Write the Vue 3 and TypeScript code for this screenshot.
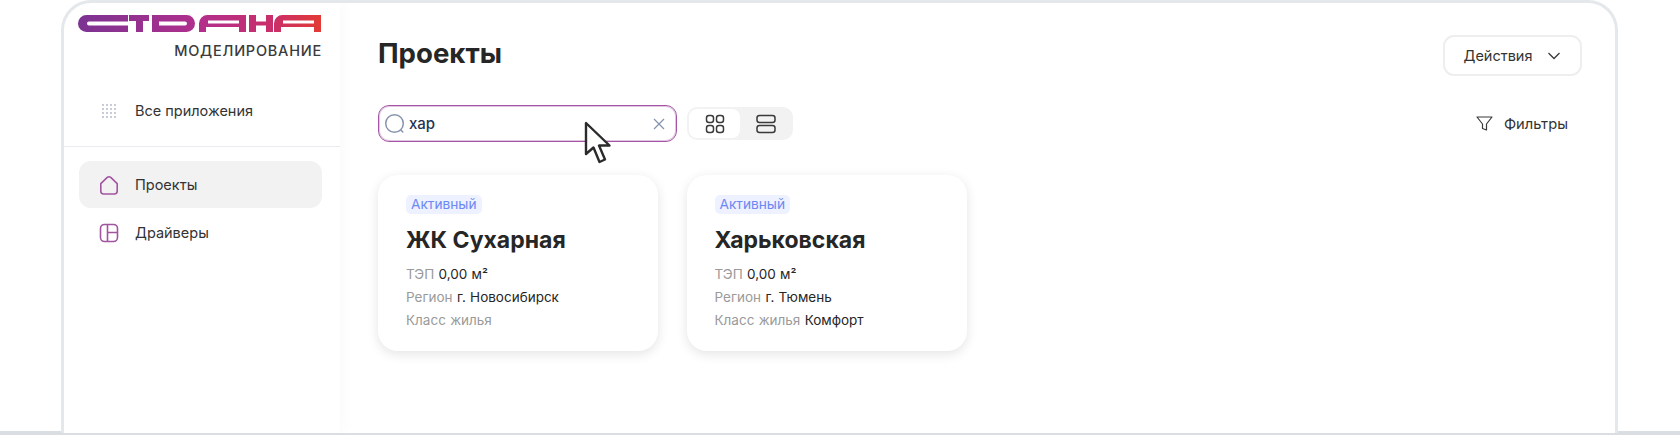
<script setup lang="ts">
const projects = [
  { name: 'ЖК Сухарная', region: 'г. Новосибирск', housing: '' },
  { name: 'Харьковская', region: 'г. Тюмень', housing: 'Комфорт' },
];

const dots = [1.5, 5.5, 9.5, 13.5];
</script>

<template>
  <div class="stage">
    <div class="frame">
      <aside class="sidebar">
        <div class="brand">
          <svg class="logo" width="244" height="17" viewBox="0 0 244 17" aria-label="Страна">
            <defs>
              <linearGradient id="logoGrad" x1="0" y1="0" x2="1" y2="0">
                <stop offset="0" stop-color="#7b3392" />
                <stop offset="0.5" stop-color="#b22f8c" />
                <stop offset="0.8" stop-color="#c92f6a" />
                <stop offset="1" stop-color="#e23a34" />
              </linearGradient>
            </defs>
            <path
              fill="url(#logoGrad)"
              fill-rule="evenodd"
              d="M50 0H8.500a8.500 8.500 0 0 0 0 17H50v-6.500H11a2 2 0 0 1 0-4H50Z
                 M51 0H71V6H65V17H58V6H51Z
                 M74 0H108.500a8.500 8.500 0 0 1 0 17H74Z M81 6.500H107a2 2 0 0 1 0 4H81Z
                 M168 0H129.500A8.500 8.500 0 0 0 121 8.500V17H128V12H161V17H168Z M130 5.500H161V8.500H130Z
                 M171 0H178V6.500H188V0H195V17H188V10.500H178V17H171Z
                 M243 0H204.500A8.500 8.500 0 0 0 196 8.500V17H203V12H236V17H243Z M205 5.500H236V8.500H205Z"
            />
          </svg>
          <div class="brand-sub">МОДЕЛИРОВАНИЕ</div>
        </div>

        <div class="nav-top">
          <a class="nav-item">
            <svg class="nav-icon" width="20" height="20" viewBox="-2.500 -2.500 20 20">
              <template v-for="y in dots" :key="y">
                <circle v-for="x in dots" :key="x" :cx="x" :cy="y" r="0.8" fill="#7f8ca6" />
              </template>
            </svg>
            <span>Все приложения</span>
          </a>
        </div>

        <nav class="nav-main">
          <a class="nav-item nav-item--active">
            <svg class="nav-icon" width="20" height="20" viewBox="0 0 20 20" fill="none" stroke="#a2559f" stroke-width="1.600">
              <path d="M1.800 8.600 8 2.700a2.900 2.900 0 0 1 4 0l6.200 5.900V16a3 3 0 0 1-3 3H4.800a3 3 0 0 1-3-3Z" stroke-linejoin="round" />
            </svg>
            <span>Проекты</span>
          </a>
          <a class="nav-item">
            <svg class="nav-icon" width="20" height="20" viewBox="0 0 20 20" fill="none" stroke="#a2559f" stroke-width="1.600">
              <rect x="1.500" y="1.500" width="17" height="17" rx="4" />
              <path d="M8.500 1.500v17M8.500 9.500H18.500" />
            </svg>
            <span>Драйверы</span>
          </a>
        </nav>
      </aside>

      <main class="content">
        <header class="page-head">
          <h1>Проекты</h1>
          <button class="actions">
            Действия
            <svg width="14" height="8" viewBox="0 0 14 8" fill="none" stroke="#3a3a3a" stroke-width="1.300">
              <path d="M1.500 1 7 6.500 12.500 1" />
            </svg>
          </button>
        </header>

        <div class="toolbar">
          <div class="search">
            <svg width="22" height="22" viewBox="0 0 22 22" fill="none" stroke="#8594ad" stroke-width="1.500">
              <circle cx="10.500" cy="10.500" r="8.800" />
              <path d="m16.800 17 2 2" stroke-linecap="round" />
            </svg>
            <span class="search-value">хар</span>
            <svg class="search-clear" width="12" height="12" viewBox="0 0 12 12" fill="none" stroke="#8594ad" stroke-width="1.200">
              <path d="M1 1l10 10M11 1 1 11" />
            </svg>
          </div>

          <div class="view-toggle">
            <span class="view-btn view-btn--on">
              <svg width="20" height="20" viewBox="0 0 20 20" fill="none" stroke="#3a3a3a" stroke-width="1.500">
                <rect x="1.500" y="1.500" width="7" height="7" rx="2.500" />
                <rect x="11.500" y="1.500" width="7" height="7" rx="2.500" />
                <rect x="1.500" y="11.500" width="7" height="7" rx="2.500" />
                <rect x="11.500" y="11.500" width="7" height="7" rx="2.500" />
              </svg>
            </span>
            <span class="view-btn">
              <svg width="20" height="20" viewBox="0 0 20 20" fill="none" stroke="#3a3a3a" stroke-width="1.500">
                <rect x="1" y="1.500" width="18" height="7" rx="2.500" />
                <rect x="1" y="11.500" width="18" height="7" rx="2.500" />
              </svg>
            </span>
          </div>

          <div class="filters">
            <svg width="17" height="16" viewBox="0 0 17 16" fill="none" stroke="#3a3a3a" stroke-width="1.200" stroke-linejoin="round">
              <path d="M1 1h15l-5.500 7v6l-4-1.500V8Z" />
            </svg>
            <span>Фильтры</span>
          </div>
        </div>

        <div class="cards">
          <article v-for="p in projects" :key="p.name" class="card">
            <span class="badge">Активный</span>
            <h2>{{ p.name }}</h2>
            <p><span class="label">ТЭП</span> 0,00 м²</p>
            <p><span class="label">Регион</span> {{ p.region }}</p>
            <p><span class="label">Класс жилья</span> {{ p.housing }}</p>
          </article>
        </div>
      </main>

      <svg class="cursor" width="28" height="44" viewBox="0 0 28 44">
        <path d="M2 2V33L9.500 26.500 15.500 41 21 38.500 15 24.500H25.500Z" fill="#fff" stroke="#2b2b2b" stroke-width="2.400" stroke-linejoin="round" />
      </svg>
    </div>
    <div class="strip"></div>
  </div>
</template>

<style scoped>
.stage {
  width: 1680px;
  height: 435px;
  background: #fff;
  overflow: hidden;
  font-family: Inter, "Noto Sans", sans-serif;
  color: #2b2b2b;
}

.frame {
  position: relative;
  z-index: 1;
  box-sizing: border-box;
  width: 1557px;
  height: 433px;
  margin-left: 61px;
  margin-bottom: -2px;
  display: flex;
  background: #fff;
  border: 3px solid #e5e8eb;
  border-bottom: none;
  border-radius: 30px 30px 0 0;
  overflow: hidden;
}

.strip {
  height: 4px;
  background: #dadde1;
}

.sidebar {
  box-sizing: border-box;
  width: 276px;
  flex-shrink: 0;
  box-shadow: 4px 0 14px rgba(0, 0, 0, 0.025);
}

.brand {
  padding: 12px 18px 0 15px;
  display: flex;
  flex-direction: column;
  align-items: flex-end;
}

.logo {
  display: block;
}

.brand-sub {
  margin-top: 10px;
  font-size: 14.500px;
  line-height: 18px;
  font-weight: 500;
  letter-spacing: 0.77px;
  color: #3b3b3b;
}

.nav-top {
  margin-top: 27px;
  padding: 0 15px 12px;
  border-bottom: 1px solid #e9ecef;
}

.nav-main {
  padding: 14px 18px 0 15px;
  display: flex;
  flex-direction: column;
  gap: 1px;
}

.nav-item {
  height: 47px;
  padding-left: 20px;
  display: flex;
  align-items: center;
  gap: 16px;
  border-radius: 12px;
  font-size: 14.500px;
  color: #333;
}

.nav-item--active {
  background: #f2f2f2;
}

.nav-icon {
  flex-shrink: 0;
}

.content {
  flex: 1;
  min-width: 0;
  padding: 32px 33px 0 38px;
}

.page-head {
  display: flex;
  align-items: flex-start;
  justify-content: space-between;
  height: 41px;
}

.page-head h1 {
  margin: 0;
  font-size: 27.600px;
  font-weight: 700;
  line-height: 36px;
  color: #262626;
}

.actions {
  box-sizing: border-box;
  width: 139px;
  height: 41px;
  display: flex;
  align-items: center;
  justify-content: center;
  gap: 15px;
  background: #fff;
  border: 2px solid #eeeeee;
  border-radius: 11px;
  font-family: inherit;
  font-size: 14.500px;
  color: #333;
}

.toolbar {
  margin-top: 29px;
  display: flex;
  align-items: center;
  gap: 10px;
}

.search {
  box-sizing: border-box;
  width: 299px;
  height: 37px;
  padding: 0 11px 0 5px;
  display: flex;
  align-items: center;
  gap: 3px;
  border: 1px solid #a555a5;
  box-shadow: inset 0 0 0 1px rgba(168, 91, 168, 0.35);
  border-radius: 11px;
}

.search-value {
  flex: 1;
  font-size: 15px;
  font-weight: 500;
  color: #1f3554;
}

.view-toggle {
  box-sizing: border-box;
  width: 106px;
  height: 33px;
  padding: 2px;
  display: flex;
  background: #f2f2f2;
  border-radius: 10px;
}

.view-btn {
  flex: 1;
  display: flex;
  align-items: center;
  justify-content: center;
  border-radius: 8px;
}

.view-btn--on {
  background: #fff;
}

.filters {
  margin-left: auto;
  margin-right: 14px;
  display: flex;
  align-items: center;
  gap: 11px;
  font-size: 14.700px;
  color: #333;
}

.cards {
  margin-top: 33px;
  display: flex;
  gap: 28.500px;
}

.card {
  box-sizing: border-box;
  width: 280px;
  height: 176px;
  padding: 20px 28px 0;
  background: #fff;
  border-radius: 20px;
  box-shadow: 0 3px 12px rgba(0, 0, 0, 0.11);
}

.badge {
  display: inline-block;
  padding: 0 5px;
  height: 19px;
  line-height: 19px;
  background: #eef1ff;
  border-radius: 5px;
  font-size: 13.700px;
  color: #6b88f5;
  vertical-align: top;
}

.card h2 {
  margin: 10px 0 8px;
  font-size: 23px;
  line-height: 30px;
  font-weight: 700;
  color: #262626;
}

.card p {
  margin: 0;
  height: 23px;
  line-height: 23px;
  font-size: 13.500px;
  word-spacing: 0.5px;
  color: #262626;
}

.label {
  color: #9a9a9a;
}

.search-clear {
  flex-shrink: 0;
}

.cursor {
  position: absolute;
  left: 520px;
  top: 118px;
}
</style>

<style>
html,
body {
  margin: 0;
  background: #fff;
}
</style>
